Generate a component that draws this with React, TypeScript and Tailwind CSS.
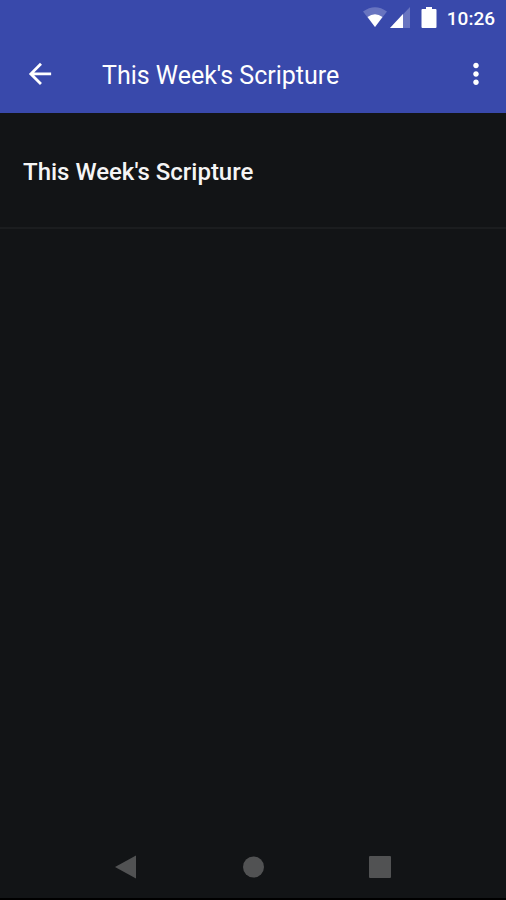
import React from "react";

function StatusBar() {
  return (
    <div className="flex h-[38px] items-center justify-end bg-[#3949ab] pr-[11px] text-white">
      <svg className="mr-[3px] h-6 w-6" viewBox="0 0 24 24" aria-hidden="true">
        <path d="M0 4.5Q12-4 24 4.5L12 20Z" fill="#6874c0" />
        <path d="M4.5 10Q12 4.5 19.5 10L12 20Z" fill="#fff" />
      </svg>
      <svg className="mr-[11px] h-6 w-5" viewBox="0 0 20 24" aria-hidden="true">
        <path d="M20 0V21H0Z" fill="#6874c0" />
        <path d="M13 7V21H0Z" fill="#fff" />
      </svg>
      <svg className="mr-[10px] h-6 w-4" viewBox="0 0 16 24" aria-hidden="true">
        <path d="M5 0h6v2h3.5q1 0 1 1v17q0 1-1 1H1.5q-1 0-1-1V3q0-1 1-1H5z" fill="#fff" />
      </svg>
      <time className="text-[19px] leading-6 font-medium">10:26</time>
    </div>
  );
}

function AppBar() {
  return (
    <header className="flex h-[75px] items-center bg-[#3949ab] text-white">
      <button type="button" aria-label="Back" className="ml-6 flex h-8 w-8 items-center justify-center">
        <svg className="h-8 w-8" viewBox="0.5 2 23 23" fill="currentColor" aria-hidden="true">
          <path d="M20 11H7.83l5.59-5.59L12 4l-8 8 8 8 1.41-1.41L7.83 13H20v-2z" />
        </svg>
      </button>
      <h1 className="ml-[46px] flex-1 text-[25px] leading-8 font-normal">This Week's Scripture</h1>
      <button type="button" aria-label="More options" className="mr-[14px] flex h-8 w-8 items-center justify-center">
        <svg className="h-8 w-8" viewBox="0.5 2 23 23" fill="currentColor" aria-hidden="true">
          <path d="M12 8c1.1 0 2-.9 2-2s-.9-2-2-2-2 .9-2 2 .9 2 2 2zm0 2c-1.1 0-2 .9-2 2s.9 2 2 2 2-.9 2-2-.9-2-2-2zm0 6c-1.1 0-2 .9-2 2s.9 2 2 2 2-.9 2-2-.9-2-2-2z" />
        </svg>
      </button>
    </header>
  );
}

function NavigationBar() {
  return (
    <nav className="flex h-[66px] justify-between border-b-2 border-black px-[114px] pt-[21px] text-[#515253]">
      <button type="button" aria-label="Back" className="h-6 w-6">
        <svg className="h-6 w-6" viewBox="0 0 24 24" fill="currentColor" aria-hidden="true">
          <path d="M22 0.5V23.5L1 12Z" />
        </svg>
      </button>
      <button type="button" aria-label="Home" className="h-6 w-6">
        <svg className="h-6 w-6" viewBox="0 0 24 24" fill="currentColor" aria-hidden="true">
          <circle cx="12.5" cy="12" r="10.5" />
        </svg>
      </button>
      <button type="button" aria-label="Recent apps" className="h-6 w-6">
        <svg className="h-6 w-6" viewBox="0 0 24 24" fill="currentColor" aria-hidden="true">
          <rect x="1" y="1" width="22" height="22" rx="1" />
        </svg>
      </button>
    </nav>
  );
}

export default function App() {
  return (
    <div className="flex min-h-screen flex-col bg-[#121416] font-['Roboto',sans-serif]">
      <StatusBar />
      <AppBar />
      <main className="flex-1">
        <h2 className="border-b-2 border-[#1b1d1f] px-[23px] pt-[43px] pb-[39px] text-[24px] leading-8 font-medium text-[#f5f5f5]">
          This Week's Scripture
        </h2>
      </main>
      <NavigationBar />
    </div>
  );
}
